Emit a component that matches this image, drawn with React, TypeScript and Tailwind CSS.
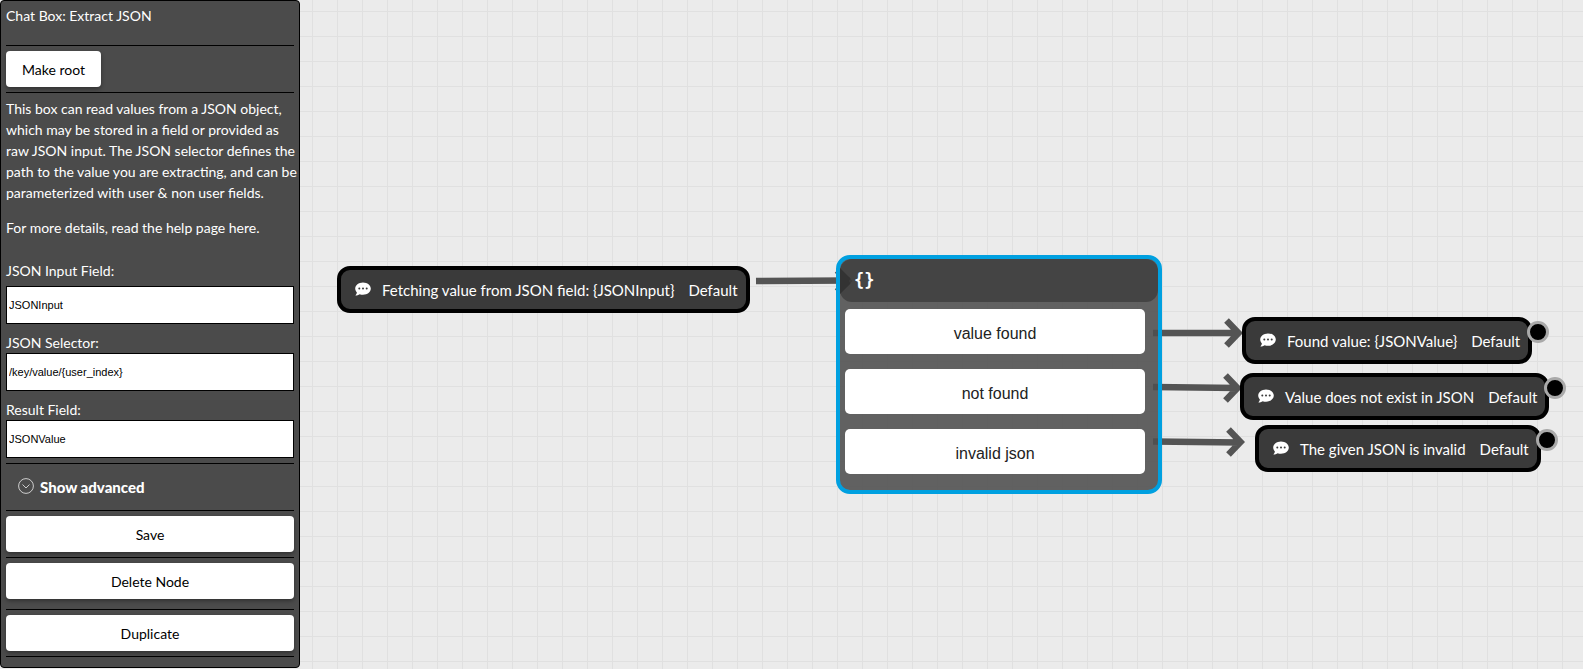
import React from "react";

const sideButton =
  "block h-9 rounded bg-white pt-px text-sm text-black shadow-[0_2px_4px_rgba(0,0,0,0.35)]";

const outcomes = ["value found", "not found", "invalid json"];

function Rule() {
  return <hr className="my-[5px] border-t border-black" />;
}

function Field({ id, label, value, labelGap = "" }: { id: string; label: string; value: string; labelGap?: string }) {
  return (
    <div className="pt-[9px]">
      <label htmlFor={id} className={`block leading-5 ${labelGap}`}>
        {label}
      </label>
      <input
        id={id}
        type="text"
        defaultValue={value}
        className="block h-[38px] w-full border border-black bg-white px-[2px] font-['Liberation_Sans',Arial,sans-serif] text-[11px] font-medium text-black"
      />
    </div>
  );
}

function SpeechIcon() {
  return (
    <svg viewBox="0 0 16 14" className="mb-1 h-[14px] w-4 shrink-0" aria-hidden="true">
      <path
        d="M8 0.4c4.4 0 7.8 2.8 7.8 6.2s-3.4 6.2-7.8 6.2c-1.2 0-2.3-.2-3.3-.6C3.5 13 1.9 13.600.4 13.600c0-.3.2-.5.5-.9.5-.6.9-1.500 1-2.300C.8 9.4.2 8.1.2 6.6.2 3.2 3.6.4 8 .4z"
        fill="#fff"
      />
      <circle cx="4.300" cy="6.600" r="1" fill="#3a3a3a" />
      <circle cx="8" cy="6.600" r="1" fill="#3a3a3a" />
      <circle cx="11.700" cy="6.600" r="1" fill="#3a3a3a" />
    </svg>
  );
}

function MessageNode({ text, place, endpoint }: { text: string; place: string; endpoint?: boolean }) {
  return (
    <div className={`absolute ${place}`}>
      <div className="flex h-[47px] items-center whitespace-nowrap rounded-[13px] border-4 border-black bg-[#3a3a3a] pl-[14px] pr-2 pt-[2px] text-[15px] text-white">
        <SpeechIcon />
        <span className="ml-[11px]">{text}</span>
        <span className="ml-[14px]">Default</span>
      </div>
      {endpoint && (
        <span className="absolute -right-[17px] top-1 size-[22px] rounded-full border-[3px] border-[#a9a9a9] bg-black" />
      )}
    </div>
  );
}

function Connectors() {
  return (
    <svg
      className="absolute left-0 top-0 h-[669px] w-[1283px]"
      viewBox="300 0 1283 669"
      fill="none"
      stroke="#545454"
      strokeWidth="6.500"
      aria-hidden="true"
    >
      <path d="M756 281L850 280.500M837 270.500L848 281L837 291.500" />
      <path d="M1153 333L1238 333M1226.500 320.500L1238.500 333L1226.500 345.500" />
      <path d="M1153 387L1238 388M1225.500 375.500L1237.500 388L1225.500 400.500" />
      <path d="M1153 441.500L1240 442.500M1228.500 429.500L1240.500 442L1228.500 454.500" />
    </svg>
  );
}

export default function App() {
  return (
    <div className="flex min-h-screen items-start bg-[#ebebeb] font-['Lato',sans-serif]">
      <aside className="w-[300px] shrink-0 rounded border border-black bg-[#4b4b4b] px-[5px] pb-[10px] text-sm text-white">
        <h1 className="h-11 pt-[5px] leading-5">Chat Box: Extract JSON</h1>
        <hr className="border-t border-black" />
        <button type="button" className={`${sideButton} mt-[5px] px-4`}>
          Make root
        </button>
        <Rule />
        <div className="-mr-[5px] leading-[21px]">
          <p>
            This box can read values from a JSON object, which may be stored in a field or provided as
            raw JSON input. The JSON selector defines the path to the value you are extracting, and can
            be parameterized with user &amp; non user fields.
          </p>
          <p className="mt-[14px]">For more details, read the help page here.</p>
        </div>
        <form className="pt-[14px]" onSubmit={(e) => e.preventDefault()}>
          <Field id="json-input" label="JSON Input Field:" value="JSONInput" labelGap="pb-[5px]" />
          <Field id="json-selector" label="JSON Selector:" value="/key/value/{user_index}" />
          <Field id="result-field" label="Result Field:" value="JSONValue" />
          <Rule />
          <button type="button" className="flex h-9 items-center pl-3 pt-[2px] text-[15px] font-black">
            <svg viewBox="0 0 16 16" className="mr-[6px] mb-1 size-4" fill="none" stroke="#ddd" strokeWidth="0.900" aria-hidden="true">
              <circle cx="8" cy="8" r="7.400" />
              <path d="M4.500 6.500L8 10L11.500 6.500" />
            </svg>
            Show advanced
          </button>
          <Rule />
          <button type="submit" className={`${sideButton} w-full`}>
            Save
          </button>
          <Rule />
          <button type="button" className={`${sideButton} w-full`}>
            Delete Node
          </button>
          <hr className="mb-[5px] mt-[10px] border-t border-black" />
          <button type="button" className={`${sideButton} w-full`}>
            Duplicate
          </button>
          <hr className="mt-[5px] border-t border-black" />
        </form>
      </aside>

      <main className="relative min-h-screen flex-1 overflow-hidden bg-[linear-gradient(to_right,#e0e0e0_1px,transparent_1px),linear-gradient(to_bottom,#e0e0e0_1px,transparent_1px)] bg-[length:25px_25px] bg-[position:12px_11px]">
        <Connectors />
        <MessageNode place="left-[37px] top-[266px]" text="Fetching value from JSON field: {JSONInput}" />

        <section className="absolute left-[536px] top-[255px] w-[326px] rounded-[14px] border-4 border-[#00a0e0] bg-[rgba(80,80,80,0.89)] pb-4">
          <h2 className="relative flex h-[43px] items-center rounded-xl bg-[rgba(40,40,40,0.5)] pl-[14px] pt-px font-['DejaVu_Sans_Mono',monospace] text-[17px] font-bold text-white">
            <svg viewBox="0 0 12 28" className="absolute left-0 top-2 h-7 w-3" aria-hidden="true">
              <path d="M0 1L10.500 11.500L9 14L10.500 16.500L0 27z" fill="#333" />
            </svg>
            {"{}"}
          </h2>
          <div className="mx-[5px] mt-[7px] flex flex-col gap-[15px] pr-2 font-['Liberation_Sans',Arial,sans-serif] text-base text-[#222]">
            {outcomes.map((name) => (
              <button key={name} type="button" className="h-[45px] rounded-[5px] bg-white pt-1">
                {name}
              </button>
            ))}
          </div>
        </section>

        <MessageNode place="left-[942px] top-[317px]" text="Found value: {JSONValue}" endpoint />
        <MessageNode place="left-[940px] top-[373px]" text="Value does not exist in JSON" endpoint />
        <MessageNode place="left-[955px] top-[425px]" text="The given JSON is invalid" endpoint />
      </main>
    </div>
  );
}
